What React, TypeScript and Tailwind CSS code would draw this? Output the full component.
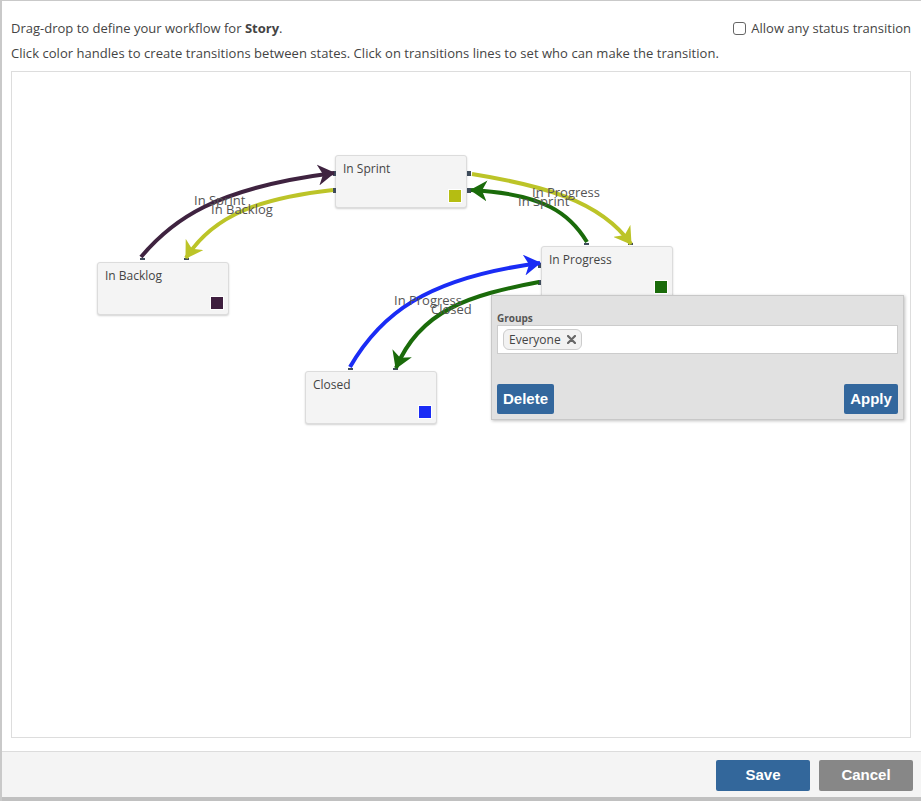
type Node = {
  name: string;
  left: number;
  top: number;
  color: string;
};

const nodes: Node[] = [
  { name: "In Sprint", left: 323, top: 83, color: "#b5bd12" },
  { name: "In Backlog", left: 85, top: 190, color: "#3f1f3f" },
  { name: "In Progress", left: 529, top: 174, color: "#1a6b0a" },
  { name: "Closed", left: 293, top: 299, color: "#1a2cf5" },
];

// transition lines, page coords (svg viewBox is shifted to canvas)
const edges = [
  { d: "M141,257 C172,220 215,188 334,173", color: "#3f2340", marker: "purple" },
  { d: "M333,190 C262,198 214,214 186,258", color: "#bcc428", marker: "yellow" },
  { d: "M472,174 C540,185 600,200 631,244", color: "#bcc428", marker: "yellow" },
  { d: "M587,242 C570,214 545,194 471,190", color: "#1a6b0a", marker: "green" },
  { d: "M350,367 C380,315 425,278 540,263", color: "#1a2cf5", marker: "blue" },
  { d: "M539,282 C470,295 420,310 396,368", color: "#1a6b0a", marker: "green" },
];

const labels = [
  { text: "In Sprint", x: 194, y: 193 },
  { text: "In Backlog", x: 211, y: 202 },
  { text: "In Progress", x: 532, y: 185 },
  { text: "In Sprint", x: 518, y: 194 },
  { text: "In Progress", x: 394, y: 293 },
  { text: "Closed", x: 431, y: 302 },
];

const handles = [
  { x: 333, y: 171, w: 3, h: 5 },
  { x: 333, y: 188, w: 3, h: 5 },
  { x: 467, y: 171, w: 4, h: 5 },
  { x: 467, y: 188, w: 4, h: 5 },
  { x: 140, y: 258, w: 5, h: 2 },
  { x: 184, y: 258, w: 5, h: 2 },
  { x: 584, y: 243, w: 5, h: 2 },
  { x: 628, y: 243, w: 5, h: 2 },
  { x: 538, y: 263, w: 3, h: 5 },
  { x: 538, y: 280, w: 3, h: 5 },
  { x: 348, y: 368, w: 5, h: 2 },
  { x: 393, y: 368, w: 5, h: 2 },
];

const markers = [
  { id: "purple", fill: "#3f2340" },
  { id: "yellow", fill: "#bcc428" },
  { id: "green", fill: "#1a6b0a" },
  { id: "blue", fill: "#1a2cf5" },
];

function StateNode({ node }: { node: Node }) {
  return (
    <div
      className="absolute w-[132px] h-[53px] bg-[#f4f4f4] border border-[#dcdcdc] rounded-[3px] shadow-[0_1px_2px_rgba(0,0,0,0.18)]"
      style={{ left: node.left, top: node.top }}
    >
      <div className="pl-[7px] pt-[4px] text-[12px] text-[#444]">{node.name}</div>
      <div
        className="absolute right-[4px] bottom-[4px] w-[14px] h-[14px] border border-white"
        style={{ backgroundColor: node.color }}
      />
    </div>
  );
}

export default function App() {
  return (
    <div
      className="w-[921px] h-[801px] flex flex-col bg-white border-t border-l-2 border-[#c9c9c9] text-[#444]"
      style={{ fontFamily: '"Open Sans", "DejaVu Sans", sans-serif' }}
    >
      <div className="pt-[18px] pl-[9px] pr-[10px] text-[13px] leading-[18px]">
        <div className="flex justify-between items-center">
          <span>
            Drag-drop to define your workflow for <b>Story</b>.
          </span>
          <label className="flex items-center gap-[5px]">
            <span className="w-[13px] h-[13px] border border-[#666] rounded-[3px] bg-white" />
            Allow any status transition
          </label>
        </div>
        <div className="mt-[7px] tracking-[0.04px]">
          Click color handles to create transitions between states. Click on transitions lines to set who can make the transition.
        </div>
      </div>

      <div className="relative ml-[9px] mt-[9px] w-[900px] h-[667px] border border-[#dddddd] bg-white">
        {nodes.map((n) => (
          <StateNode key={n.name} node={n} />
        ))}

        <svg
          className="absolute left-0 top-0 pointer-events-none"
          width={898}
          height={665}
          viewBox="12 72 898 665"
        >
          <defs>
            {markers.map((m) => (
              <marker
                key={m.id}
                id={m.id}
                markerUnits="userSpaceOnUse"
                viewBox="0 0 17 21"
                markerWidth={17}
                markerHeight={21}
                refX={16}
                refY={10.5}
                orient="auto"
              >
                <path d="M0,0 L17,10.5 L0,21 L5,10.5 z" fill={m.fill} />
              </marker>
            ))}
          </defs>
          {handles.map((h, i) => (
            <rect key={i} x={h.x} y={h.y} width={h.w} height={h.h} fill="#3e4b5b" />
          ))}
          {edges.map((e, i) => (
            <path
              key={i}
              d={e.d}
              fill="none"
              stroke={e.color}
              strokeWidth={4}
              markerEnd={`url(#${e.marker})`}
            />
          ))}
        </svg>

        {labels.map((l, i) => (
          <div
            key={i}
            className="absolute text-[13px] leading-[14px] text-[#555] whitespace-nowrap"
            style={{ left: l.x - 12, top: l.y - 72 }}
          >
            {l.text}
          </div>
        ))}

        <div className="absolute left-[479px] top-[223px] w-[413px] h-[125px] bg-[#e1e1e1] border border-[#c8c8c8] shadow-[1px_1px_3px_rgba(0,0,0,0.25)] px-[5px] pt-[16px]">
          <div className="text-[10px] leading-[12px] font-bold text-[#555]">Groups</div>
          <div className="mt-[1px] h-[29px] bg-white border border-[#cccccc] flex items-center px-[5px]">
            <span className="h-[21px] flex items-center gap-[6px] px-[5px] bg-[#f2f2f2] border border-[#cccccc] rounded-[6px] text-[12px] text-[#444]">
              Everyone
              <svg width="9" height="9" viewBox="0 0 9 9">
                <path d="M1,1 L8,8 M8,1 L1,8" stroke="#666" strokeWidth="2.2" strokeLinecap="round" />
              </svg>
            </span>
          </div>
          <div
            className="flex justify-between mt-[30px]"
            style={{ fontFamily: '"Liberation Sans", Arial, sans-serif' }}
          >
            <button className="w-[57px] h-[30px] bg-[#33679d] text-white font-bold text-[15px] rounded-[2px]">
              Delete
            </button>
            <button className="w-[54px] h-[30px] bg-[#33679d] text-white font-bold text-[15px] rounded-[2px]">
              Apply
            </button>
          </div>
        </div>
      </div>

      <div className="mt-[13px] flex-1 bg-[#f4f4f4] border-t border-[#dcdcdc] border-b-4 border-b-[#c0c0c0] flex justify-end items-start gap-[9px] pr-[8px] pt-[8px]">
        <button
          className="w-[94px] h-[31px] bg-[#33679b] text-white font-bold text-[15px] rounded-[2px]"
          style={{ fontFamily: '"Liberation Sans", Arial, sans-serif' }}
        >
          Save
        </button>
        <button
          className="w-[94px] h-[31px] bg-[#878787] text-white font-bold text-[15px] rounded-[2px]"
          style={{ fontFamily: '"Liberation Sans", Arial, sans-serif' }}
        >
          Cancel
        </button>
      </div>
    </div>
  );
}
